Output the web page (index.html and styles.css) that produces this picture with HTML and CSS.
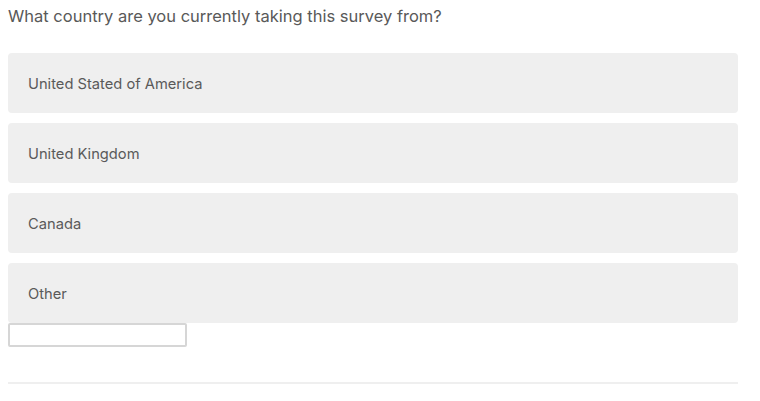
FILE: index.html
```html
<!DOCTYPE html>
<html>
<head>
<meta charset="utf-8">
<link rel="stylesheet" href="styles.css">
</head>
<body>
<div class="survey">
  <div class="question">What country are you currently taking this survey from?</div>
  <div class="options">
    <div class="option">United Stated of America</div>
    <div class="option">United Kingdom</div>
    <div class="option">Canada</div>
    <div class="option">Other</div>
  </div>
  <input class="other-input" type="text">
  <div class="rule"></div>
</div>
</body>
</html>
```

FILE: styles.css
```css
html, body {
  margin: 0;
  padding: 0;
  background: #fff;
}
body {
  font-family: Inter, "Liberation Sans", Arial, sans-serif;
  color: #4d4d4d;
}
.survey {
  width: 730px;
  padding: 0 8px;
}
.question {
  font-size: 16.5px;
  line-height: 20px;
  padding-top: 6px;
  height: 53px;
  box-sizing: border-box;
  color: #595959;
}
.options {
  display: flex;
  flex-direction: column;
  gap: 10px;
}
.option {
  height: 60px;
  box-sizing: border-box;
  padding: 2px 20px 0;
  background: #efefef;
  border-radius: 4px;
  display: flex;
  align-items: center;
  font-size: 14.7px;
  color: #5a5a5a;
}
.other-input {
  display: block;
  width: 179px;
  height: 24px;
  box-sizing: border-box;
  margin: 0;
  border: 2px solid #d6d6d6;
  border-radius: 2px;
  background: #fff;
  padding: 0;
}
.rule {
  margin-top: 35px;
  height: 2px;
  background: #efefef;
}
```
